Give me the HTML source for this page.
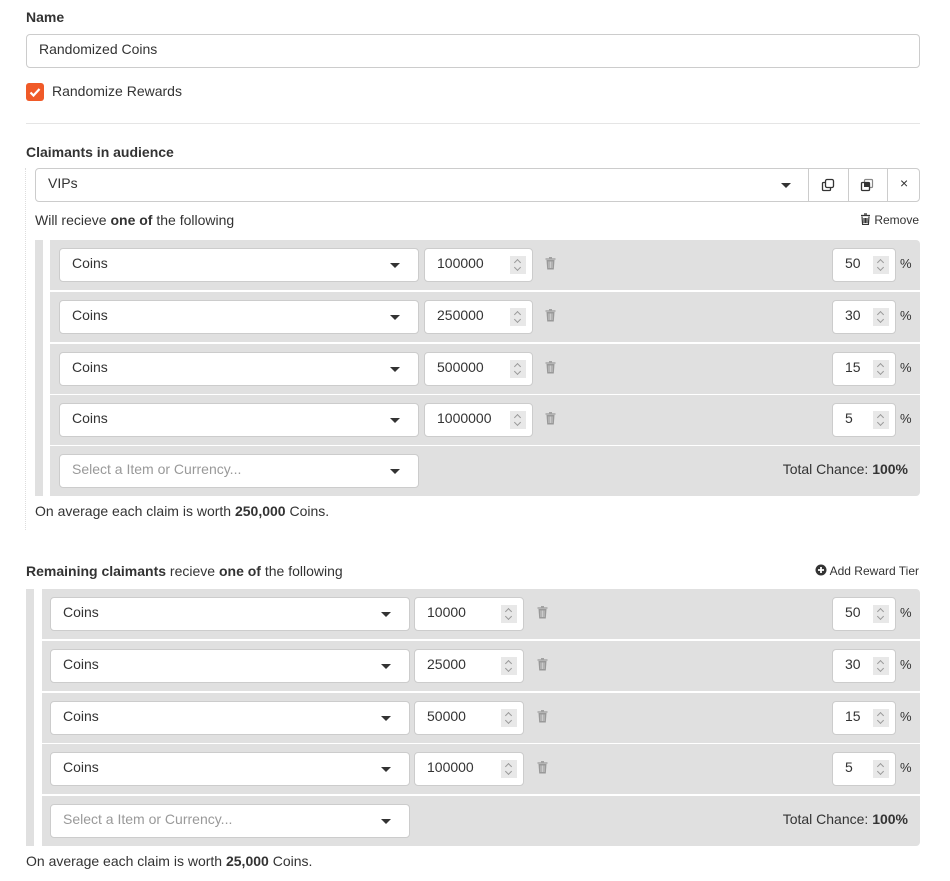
<!DOCTYPE html>
<html><head><meta charset="utf-8"><style>
*{box-sizing:border-box;margin:0;padding:0}
body{width:950px;height:881px;background:#fff;font-family:"Liberation Sans",Arial,sans-serif;font-size:14px;color:#333;position:relative;overflow:hidden}
.a{position:absolute}
.inp{position:absolute;background:#fff;border:1px solid #ccc;border-radius:4px;height:34px;line-height:29px;padding-left:12px;font-size:14px;color:#333}
.car{position:absolute;right:18px;top:14px;width:0;height:0;border-left:5px solid transparent;border-right:5px solid transparent;border-top:5px solid #333}
.spin{position:absolute;right:6px;top:7px;width:16px;height:18px;background:#e8e8e8;}
.spin:before{content:"";position:absolute;left:5px;top:4px;width:4px;height:4px;border-left:1px solid #999;border-top:1px solid #999;transform:rotate(45deg)}
.spin:after{content:"";position:absolute;left:5px;top:9px;width:4px;height:4px;border-right:1px solid #999;border-bottom:1px solid #999;transform:rotate(45deg)}
.row{position:absolute;background:#e0e0e0;height:50px}
.strip{position:absolute;background:#e0e0e0}
.tr{position:absolute;width:11px;height:13px}
.pct{position:absolute;font-size:13px;color:#333}
.b{font-weight:bold}
</style></head><body>
<svg width="0" height="0" style="position:absolute"><defs><g id="t"><path d="M0.5 2h10M4 0.7h3" stroke="#999" stroke-width="1.2" fill="none"/><path d="M1.5 3l.7 9.5h6.6l.7-9.5z" fill="#999"/><path d="M4 4.5v6.5M5.5 4.5v6.5M7 4.5v6.5" stroke="#e0e0e0" stroke-width="0.7"/></g></defs></svg>
<div class="a b" style="left:26px;top:9px;font-size:14px">Name</div>
<div class="inp" style="left:26px;top:34px;width:894px">Randomized Coins</div>
<div class="a" style="left:26px;top:83px;width:18px;height:18px;background:#f05a28;border-radius:3px"><svg width="18" height="18"><path d="M4.5 9.5l3 3 6-6.5" stroke="#fff" stroke-width="2.2" fill="none"/></svg></div>
<div class="a" style="left:52px;top:83px">Randomize Rewards</div>
<div class="a" style="left:26px;top:123px;width:894px;height:1px;background:#e5e5e5"></div>
<div class="a b" style="left:26px;top:144px">Claimants in audience</div>
<div class="a" style="left:25px;top:168px;height:362px;border-left:1px dotted #ddd"></div>
<div class="inp" style="left:35px;top:168px;width:885px;padding-left:12px">VIPs
<div class="car" style="right:128px"></div>
<div class="a" style="left:772px;top:0;width:1px;height:32px;background:#ccc"></div>
<div class="a" style="left:812px;top:0;width:1px;height:32px;background:#ccc"></div>
<div class="a" style="left:851px;top:0;width:1px;height:32px;background:#ccc"></div>
<svg class="a" style="left:785px;top:9px" width="14" height="14"><rect x="4.5" y="1.5" width="8" height="8" rx="1.5" fill="#fff" stroke="#333" stroke-width="1.3"/><path d="M4.5 4.5h-2a1 1 0 0 0-1 1v6a1 1 0 0 0 1 1h6a1 1 0 0 0 1-1v-2" fill="none" stroke="#333" stroke-width="1.3"/></svg>
<svg class="a" style="left:824px;top:9px" width="14" height="14"><rect x="4.5" y="1.5" width="8" height="8" rx="1" fill="#fff" stroke="#888" stroke-width="1.2"/><rect x="1.5" y="4.5" width="8" height="8" rx="1" fill="#fff" stroke="#333" stroke-width="1.3"/><rect x="4" y="5" width="5" height="4" fill="#333"/></svg>
<div class="a" style="left:864px;top:6px;line-height:16px;font-size:14px">×</div>
</div>
<div class="a" style="left:35px;top:212px">Will recieve <b>one of</b> the following</div>
<div class="a" style="left:860px;top:213px;font-size:12px"><svg width="11" height="12" style="vertical-align:-1px"><path d="M1 2.5h9M4 1h3M2 3.5l.6 8h5.8l.6-8M4 5v5M5.5 5v5M7 5v5" stroke="#333" stroke-width="1.2" fill="none"/></svg> Remove</div>

<div class="strip" style="left:35px;top:240px;width:8px;height:256px"></div>
<div class="row" style="left:50px;top:240px;width:870px;border-radius:0 4px 0 0"></div>
<div class="row" style="left:50px;top:292px;width:870px"></div>
<div class="row" style="left:50px;top:344px;width:870px"></div>
<div class="row" style="left:50px;top:395px;width:870px"></div>
<div class="row" style="left:50px;top:446px;width:870px;border-radius:0 0 4px 0"></div>

<div class="strip" style="left:26px;top:589px;width:8px;height:257px"></div>
<div class="row" style="left:42px;top:589px;width:878px;border-radius:0 4px 0 0"></div>
<div class="row" style="left:42px;top:641px;width:878px"></div>
<div class="row" style="left:42px;top:693px;width:878px"></div>
<div class="row" style="left:42px;top:744px;width:878px"></div>
<div class="row" style="left:42px;top:796px;width:878px;border-radius:0 0 4px 0"></div>

<div class="inp" style="left:59px;top:248px;width:360px">Coins<div class="car"></div></div>
<div class="inp" style="left:424px;top:248px;width:109px">100000<div class="spin"></div></div>
<svg class="tr" style="left:545px;top:257px"><use href="#t"/></svg>
<div class="inp" style="left:832px;top:248px;width:64px">50<div class="spin"></div></div><div class="pct" style="left:900px;top:256px">%</div>

<div class="inp" style="left:59px;top:300px;width:360px">Coins<div class="car"></div></div>
<div class="inp" style="left:424px;top:300px;width:109px">250000<div class="spin"></div></div>
<svg class="tr" style="left:545px;top:309px"><use href="#t"/></svg>
<div class="inp" style="left:832px;top:300px;width:64px">30<div class="spin"></div></div><div class="pct" style="left:900px;top:308px">%</div>

<div class="inp" style="left:59px;top:352px;width:360px">Coins<div class="car"></div></div>
<div class="inp" style="left:424px;top:352px;width:109px">500000<div class="spin"></div></div>
<svg class="tr" style="left:545px;top:361px"><use href="#t"/></svg>
<div class="inp" style="left:832px;top:352px;width:64px">15<div class="spin"></div></div><div class="pct" style="left:900px;top:360px">%</div>

<div class="inp" style="left:59px;top:403px;width:360px">Coins<div class="car"></div></div>
<div class="inp" style="left:424px;top:403px;width:109px">1000000<div class="spin"></div></div>
<svg class="tr" style="left:545px;top:412px"><use href="#t"/></svg>
<div class="inp" style="left:832px;top:403px;width:64px">5<div class="spin"></div></div><div class="pct" style="left:900px;top:411px">%</div>

<div class="inp" style="left:59px;top:454px;width:360px;color:#999">Select a Item or Currency...<div class="car"></div></div>
<div class="a" style="right:42px;top:461px">Total Chance: <b>100%</b></div>
<div class="a" style="left:35px;top:503px">On average each claim is worth <b>250,000</b> Coins.</div>

<div class="a" style="left:26px;top:563px"><b>Remaining claimants</b> recieve <b>one of</b> the following</div>
<div class="a" style="right:31px;top:564px;font-size:12px"><svg width="12" height="12" style="vertical-align:-1px"><circle cx="6" cy="6" r="5.5" fill="#333"/><path d="M6 3v6M3 6h6" stroke="#fff" stroke-width="1.8"/></svg> Add Reward Tier</div>

<div class="inp" style="left:50px;top:597px;width:360px">Coins<div class="car"></div></div>
<div class="inp" style="left:414px;top:597px;width:110px">10000<div class="spin"></div></div>
<svg class="tr" style="left:537px;top:606px"><use href="#t"/></svg>
<div class="inp" style="left:832px;top:597px;width:64px">50<div class="spin"></div></div><div class="pct" style="left:900px;top:605px">%</div>

<div class="inp" style="left:50px;top:649px;width:360px">Coins<div class="car"></div></div>
<div class="inp" style="left:414px;top:649px;width:110px">25000<div class="spin"></div></div>
<svg class="tr" style="left:537px;top:658px"><use href="#t"/></svg>
<div class="inp" style="left:832px;top:649px;width:64px">30<div class="spin"></div></div><div class="pct" style="left:900px;top:657px">%</div>

<div class="inp" style="left:50px;top:701px;width:360px">Coins<div class="car"></div></div>
<div class="inp" style="left:414px;top:701px;width:110px">50000<div class="spin"></div></div>
<svg class="tr" style="left:537px;top:710px"><use href="#t"/></svg>
<div class="inp" style="left:832px;top:701px;width:64px">15<div class="spin"></div></div><div class="pct" style="left:900px;top:709px">%</div>

<div class="inp" style="left:50px;top:752px;width:360px">Coins<div class="car"></div></div>
<div class="inp" style="left:414px;top:752px;width:110px">100000<div class="spin"></div></div>
<svg class="tr" style="left:537px;top:761px"><use href="#t"/></svg>
<div class="inp" style="left:832px;top:752px;width:64px">5<div class="spin"></div></div><div class="pct" style="left:900px;top:760px">%</div>

<div class="inp" style="left:50px;top:804px;width:360px;color:#999">Select a Item or Currency...<div class="car"></div></div>
<div class="a" style="right:42px;top:811px">Total Chance: <b>100%</b></div>
<div class="a" style="left:26px;top:853px">On average each claim is worth <b>25,000</b> Coins.</div>
</body></html>
